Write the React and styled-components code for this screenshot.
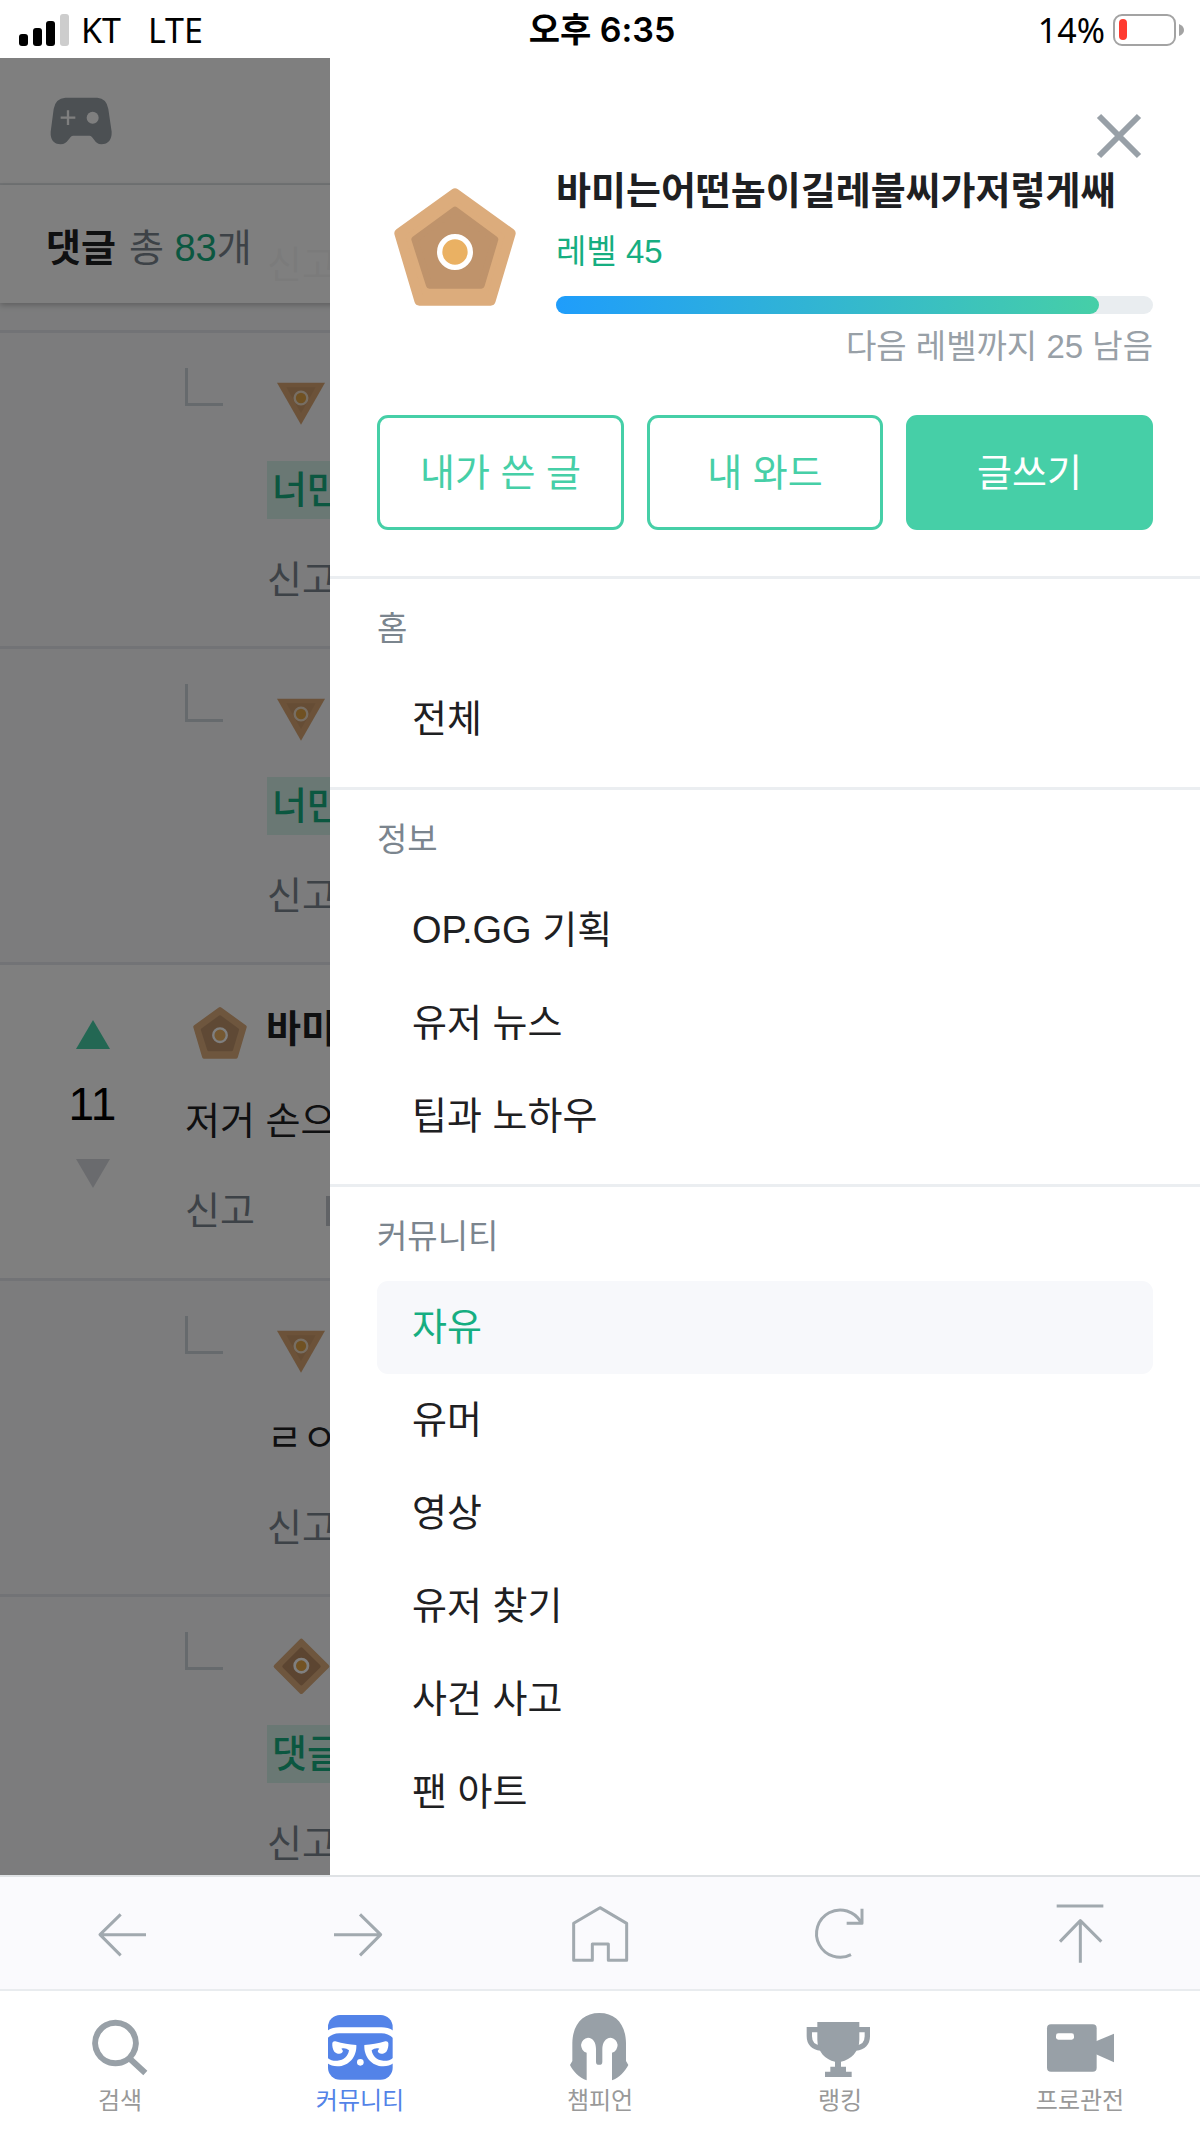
import React from 'react';
import { useState } from 'react';
import styled, { createGlobalStyle, css } from 'styled-components';

const sections = [
  { title: '홈', items: ['전체'] },
  { title: '정보', items: ['OP.GG 기획', '유저 뉴스', '팁과 노하우'] },
  { title: '커뮤니티', items: ['자유', '유머', '영상', '유저 찾기', '사건 사고', '팬 아트'] },
];

function Pentagon({ width, height }) {
  return (
    <svg width={width} height={height} viewBox="0 0 366 354" aria-hidden="true">
      <path d="M183 16 L350 136 L290 338 H76 L16 136 Z" fill="#dcac7c" stroke="#dcac7c" strokeWidth="30" strokeLinejoin="round" />
      <path d="M183 66 L303 154 L262 292 H106 L62 154 Z" fill="#bf936b" stroke="#bf936b" strokeWidth="20" strokeLinejoin="round" />
      <circle cx="183" cy="192" r="46" fill="#eab163" stroke="#fff" strokeWidth="16" />
    </svg>
  );
}

function Triangle() {
  return (
    <svg width="57" height="57" viewBox="0 0 171 171" aria-hidden="true">
      <path d="M12 26 H156 L84 152 Z" fill="#d8a473" />
      <path d="M40 40 H128 L84 118 Z" fill="#cd9b6b" />
      <circle cx="84" cy="72" r="19" fill="#e0a245" stroke="#efdcc6" strokeWidth="7" />
    </svg>
  );
}

function Diamond() {
  return (
    <svg width="57" height="57" viewBox="0 0 171 171" aria-hidden="true">
      <path d="M85 8 L163 85 L85 162 L8 85 Z" fill="#dcac7c" stroke="#dcac7c" strokeWidth="12" strokeLinejoin="round" />
      <path d="M85 34 L137 85 L85 136 L34 85 Z" fill="#b98b62" stroke="#b98b62" strokeWidth="12" strokeLinejoin="round" />
      <circle cx="85" cy="83" r="20" fill="#e6a746" stroke="#fff" strokeWidth="8" />
    </svg>
  );
}

function Reply({ icon, mark, text }) {
  return (
    <ReplyRow>
      <Elbow />
      <ReplyBody>
        <Badge>{icon}</Badge>
        <CommentLine>{mark ? <Mention href="#">{mark}</Mention> : text}</CommentLine>
        <Report>신고</Report>
      </ReplyBody>
    </ReplyRow>
  );
}

const tools = [
  { name: '뒤로', d: 'M168 95 H30 M92 34 L30 95 L92 157' },
  { name: '앞으로', d: 'M12 95 H152 M90 34 L152 95 L90 157' },
  { name: '홈', d: 'M90 14 L170 61 V172 H115 V123 H67 V172 H11 V61 Z' },
  { name: '새로고침', d: 'M153 58 A71 71 0 1 0 123 155 M156 17 V61 H110' },
  { name: '맨 위로', d: 'M20 9 H160 M91 179 V53 M30 116 L91 53 L154 116' },
];

const eye = 'M19 90 Q20 84 28 85 C50 92 70 95 91 96 C93 130 70 160 34 160 C22 160 12 156 4 151 V134 C14 142 24 144 34 143 C54 142 66 130 69 112 C62 106 54 104 46 107 C52 112 52 116 47 120 C42 124 30 122 25 116 C20 110 18 98 19 90 Z';

const tabs = [
  {
    name: '검색',
    icon: <path d="M88 29 a61 61 0 1 0 1 0 Z M130 136 L178 180" fill="none" stroke="currentColor" strokeWidth="18" />,
  },
  {
    name: '커뮤니티',
    icon: (
      <>
        <rect x="6" y="6" width="194" height="194" rx="36" fill="currentColor" />
        <path d="M4 53 Q20 43 40 43 H166 Q186 43 202 53 V76 Q186 61 166 61 H40 Q20 61 4 76 Z" fill="#fff" />
        <path d={eye} fill="#fff" />
        <path d={eye} fill="#fff" transform="translate(206 0) scale(-1 1)" />
        <circle cx="103" cy="148" r="10" fill="#fff" />
      </>
    ),
  },
  {
    name: '챔피언',
    icon: <path d="M62 202 C40 194 20 174 12 156 L19 144 V90 C20 35 50 0 100 0 C150 0 179 35 180 90 V144 L187 156 C178 174 160 194 138 202 V119 A23 23 0 0 0 134 74 C118 74 109 90 109 108 V146 a9 9 0 0 1 -19 0 V108 C90 90 82 74 66 74 A23 23 0 0 0 62 119 Z" fill="currentColor" />,
  },
  {
    name: '랭킹',
    icon: (
      <>
        <path d="M34 27 H160 V80 C160 115 135 140 105 146 V161 H120 V176 H137 V192 H57 V176 H73 V161 H87 V146 C58 140 34 115 34 80 Z" fill="currentColor" />
        <path d="M36 50 H10 V70 C10 90 22 104 44 105 M158 50 H184 V70 C184 90 172 104 150 105" fill="none" stroke="currentColor" strokeWidth="16" />
      </>
    ),
  },
  {
    name: '프로관전',
    icon: (
      <>
        <rect x="3" y="34" width="149" height="142" rx="12" fill="currentColor" />
        <path d="M150 85 L204 62 V148 L150 124 Z" fill="currentColor" />
        <rect x="30" y="61" width="54" height="19" rx="7" fill="#fff" />
      </>
    ),
  },
];

function App() {
  const [board, setBoard] = useState('자유');
  const [tab, setTab] = useState('커뮤니티');

  return <Container>
      <GlobalStyle />
      <StatusBar>
        <StatusSide>
          <svg width="51" height="32" viewBox="0 0 51 32" aria-hidden="true">
            <rect x="0" y="20" width="9" height="12" rx="3" />
            <rect x="14" y="14" width="9" height="18" rx="3" />
            <rect x="27" y="7" width="9" height="25" rx="3" />
            <rect x="41" y="0" width="9" height="32" rx="3" fill="#cdcdcd" />
          </svg>
          <Carrier>KT</Carrier>
          <Carrier>LTE</Carrier>
        </StatusSide>
        <Clock>오후 6:35</Clock>
        <StatusSide $end>
          <span>14%</span>
          <svg width="73" height="33" viewBox="0 0 73 33" aria-hidden="true">
            <rect x="2" y="1" width="61" height="30" rx="8" fill="none" stroke="#a3a3a3" strokeWidth="2" />
            <rect x="7" y="5" width="8" height="21" rx="4" fill="#ff3b30" />
            <path d="M67 10 Q72 12 72 16 Q72 20 67 22 Z" fill="#a3a3a3" />
          </svg>
        </StatusSide>
      </StatusBar>

      <Stage>
        <Header>
          <svg width="62" height="48" viewBox="0 0 186 144" aria-hidden="true">
            <path d="M46 2 H142 Q170 4 175 36 L185 104 Q186 140 154 142 C134 142 130 116 118 116 H70 C58 116 54 142 32 142 Q0 140 2 104 L11 36 Q16 4 46 2 Z" fill="#98a0a7" />
            <path d="M54 40 V84 M32 62 H76" stroke="#fff" strokeWidth="7" />
            <circle cx="128" cy="62" r="18" fill="#fff" />
          </svg>
        </Header>
        <TitleBar>
          <h2>댓글</h2>
          <span>총 <em>83</em>개</span>
        </TitleBar>
        <TuckedRow>
          <Report>신고</Report>
        </TuckedRow>
        <Reply icon={<Triangle />} mark="너만" />
        <Reply icon={<Triangle />} mark="너만" />
        <Comment>
          <Votes>
            <VoteButton aria-label="추천">
              <svg width="34" height="29" viewBox="0 0 34 29"><path d="M17 0 L34 29 H0 Z" fill="#46cfa7" /></svg>
            </VoteButton>
            <Score>11</Score>
            <VoteButton aria-label="비추천">
              <svg width="34" height="29" viewBox="0 0 34 29"><path d="M0 0 H34 L17 29 Z" fill="#d5d7dd" /></svg>
            </VoteButton>
          </Votes>
          <CommentBody>
            <Author><Pentagon width="54" height="52" /><strong>바미</strong></Author>
            <CommentLine>저거 손으</CommentLine>
            <Actions>
              <Report>신고</Report>
              <svg width="32" height="30" viewBox="0 0 32 30" aria-hidden="true"><path d="M0 0 H32 V30 H0 Z" fill="#c3c7cd" /></svg>
            </Actions>
          </CommentBody>
        </Comment>
        <Reply icon={<Triangle />} text="ㄹㅇ" />
        <Reply icon={<Diamond />} mark="댓글" />

        <Dim />
        <Drawer>
          <CloseButton aria-label="닫기">
            <svg width="44" height="44" viewBox="0 0 44 44"><path d="M2 2 L42 42 M42 2 L2 42" stroke="#98a0a7" strokeWidth="6" /></svg>
          </CloseButton>
          <Profile>
            <Avatar><Pentagon width="122" height="118" /></Avatar>
            <Info>
              <Nickname>바미는어떤놈이길레불씨가저렇게쌔</Nickname>
              <Level>레벨 45</Level>
              <Gauge><GaugeFill $percent={91} /></Gauge>
              <NextLevel>다음 레벨까지 25 남음</NextLevel>
            </Info>
          </Profile>
          <ButtonRow>
            <MyButton>내가 쓴 글</MyButton>
            <MyButton>내 와드</MyButton>
            <MyButton $primary>글쓰기</MyButton>
          </ButtonRow>
          {sections.map((section) => (
            <Section key={section.title}>
              <SectionTitle>{section.title}</SectionTitle>
              {section.items.map((item) => (
                <BoardLink href="#" key={item} $active={item === board} onClick={() => setBoard(item)}>{item}</BoardLink>
              ))}
            </Section>
          ))}
        </Drawer>
      </Stage>

      <ToolBar>
        {tools.map((tool) => (
          <ToolButton key={tool.name} aria-label={tool.name}>
            <svg width="60" height="60" viewBox="0 0 180 180">
              <path d={tool.d} fill="none" stroke="#a1a9af" strokeWidth="9" strokeLinejoin="round" />
            </svg>
          </ToolButton>
        ))}
      </ToolBar>
      <TabBar>
        {tabs.map((item) => (
          <TabButton key={item.name} $active={item.name === tab} onClick={() => setTab(item.name)}>
            <svg width="68" height="68" viewBox="0 0 204 204" aria-hidden="true">{item.icon}</svg>
            <span>{item.name}</span>
          </TabButton>
        ))}
      </TabBar>
  </Container>;
}

export default App;


// **************Styling***************

const GlobalStyle = createGlobalStyle`
  * {
    box-sizing: border-box;
  }

  body {
    margin: 0;
    background: #fff;
    color: #1e2022;
    font-family: "Liberation Sans", "Noto Sans CJK KR", sans-serif;
    font-size: 38px;
  }

  h2, h3, p {
    margin: 0;
    font-size: inherit;
  }

  a {
    color: inherit;
    text-decoration: none;
  }

  button {
    border: 0;
    padding: 0;
    background: none;
    font: inherit;
    color: inherit;
    cursor: pointer;
  }

  svg {
    display: block;
    flex-shrink: 0;
    overflow: visible;
  }
`;

const Container = styled.div`
  display: flex;
  flex-direction: column;
  height: 100vh;
  overflow: hidden;
`;

const StatusBar = styled.div`
  display: grid;
  grid-template-columns: 1fr auto 1fr;
  align-items: center;
  flex-shrink: 0;
  height: 58px;
  padding: 0 15px 0 19px;
  color: #000;
  font-family: "Noto Sans", "Noto Sans CJK KR", sans-serif;
  font-size: 34px;
  line-height: 60px;
`;

const StatusSide = styled.div`
  display: flex;
  align-items: center;
  justify-content: ${props => props.$end ? 'flex-end' : 'flex-start'};
  gap: ${props => props.$end ? '7px' : '0'};
`;

const Carrier = styled.span`
  padding-left: 11px;
  margin-right: 16px;
`;

const Clock = styled.div`
  font-family: Inter, "Noto Sans CJK KR", sans-serif;
  font-weight: 600;
`;

const Stage = styled.main`
  position: relative;
  flex: 1;
  min-height: 0;
  overflow: hidden;
`;

const Header = styled.header`
  display: flex;
  align-items: center;
  height: 127px;
  padding-left: 50px;
  border-bottom: 2px solid #e4e8eb;
`;

const TitleBar = styled.div`
  position: relative;
  z-index: 1;
  display: flex;
  align-items: center;
  gap: 13px;
  height: 118px;
  margin-bottom: -118px;
  padding-left: 46px;
  background: rgba(255, 255, 255, 0.93);
  box-shadow: 0 2px 6px rgba(0, 0, 0, 0.25);
  color: #7b858e;

  h2 {
    color: #1e2022;
  }

  em {
    font-style: normal;
    color: #16ae81;
  }
`;

const row = css`
  display: flex;
  align-items: flex-start;
  height: 316px;
  border-top: 3px solid #e4e6ec;
`;

const TuckedRow = styled.div`
  height: 145px;
  padding: 57px 0 0 267px;
  background: #f8f9fa;
`;

const ReplyRow = styled.article`
  ${row}
  gap: 44px;
  padding-left: 185px;
  background: #f8f9fa;
`;

const Elbow = styled.i`
  width: 38px;
  height: 38px;
  margin-top: 35px;
  border: solid #cdd5db;
  border-width: 0 0 3px 3px;
`;

const ReplyBody = styled.div`
  padding-top: 41px;
`;

const Badge = styled.div`
  padding-left: 6px;
`;

const CommentLine = styled.p`
  margin: 30px 0 38px;
  line-height: 58px;
`;

const Mention = styled.a`
  display: inline-block;
  padding: 0 5px;
  background: #d5f0e8;
  color: #16ae81;
  font-weight: 500;
`;

const Report = styled.button`
  display: block;
  line-height: 46px;
  color: #7b858e;
`;

const Comment = styled.article`
  ${row}
  background: #fff;
`;

const Votes = styled.div`
  display: flex;
  flex-direction: column;
  align-items: center;
  width: 185px;
  padding-top: 55px;
`;

const VoteButton = styled.button`
  width: 34px;
`;

const Score = styled.span`
  margin: 25px 0;
  color: #000;
  font-size: 46px;
  line-height: 60px;
`;

const CommentBody = styled.div`
  padding-top: 39px;
`;

const Author = styled.div`
  display: flex;
  align-items: center;
  gap: 19px;
  height: 58px;
  padding-left: 8px;

  strong {
    height: 58px;
    line-height: 50px;
  }
`;

const Actions = styled.div`
  display: flex;
  align-items: center;
  gap: 71px;
`;

const Dim = styled.div`
  position: absolute;
  inset: 0;
  z-index: 2;
  background: rgba(0, 0, 0, 0.5);
`;

const Drawer = styled.aside`
  position: absolute;
  top: 0;
  right: 0;
  bottom: 0;
  z-index: 3;
  display: flex;
  flex-direction: column;
  width: 72.5%;
  padding-top: 44px;
  overflow: hidden;
  background: #fff;
`;

const CloseButton = styled.button`
  align-self: flex-end;
  margin-right: 47px;
  padding: 12px 12px 9px;
`;

const Profile = styled.div`
  display: flex;
  gap: 40px;
  padding: 0 47px;
`;

const Avatar = styled.div`
  padding: 21px 0 0 17px;
`;

const Info = styled.div`
  flex: 1;
  min-width: 0;
`;

const Nickname = styled.h3`
  line-height: 48px;
  white-space: nowrap;
`;

const Level = styled.p`
  margin-top: 17px;
  color: #16ae81;
  font-size: 33px;
  line-height: 40px;
`;

const Gauge = styled.div`
  height: 18px;
  margin: 24px 0 13px;
  border-radius: 9px;
  background: #e9edf0;
`;

const GaugeFill = styled.div`
  width: ${props => props.$percent}%;
  height: 100%;
  border-radius: 9px;
  background: linear-gradient(90deg, #1f9dfb, #46cfa7);
`;

const NextLevel = styled.p`
  color: #98a0a7;
  font-size: 33px;
  line-height: 40px;
  text-align: right;
`;

const ButtonRow = styled.div`
  display: grid;
  grid-template-columns: 247fr 236fr 247fr;
  gap: 23px;
  padding: 48px 47px 46px;
`;

const MyButton = styled.button`
  height: 115px;
  padding-bottom: 6px;
  border: 3px solid #46cfa7;
  border-radius: 11px;
  background: ${props => props.$primary ? '#46cfa7' : '#fff'};
  color: ${props => props.$primary ? '#fff' : '#46cfa7'};
`;

const Section = styled.nav`
  padding: 0 47px 21px;
  border-top: 3px solid #ebeef1;
`;

const SectionTitle = styled.h3`
  padding-top: 6px;
  color: #7b858e;
  font-size: 33px;
  font-weight: 400;
  line-height: 88px;
`;

const BoardLink = styled.a`
  display: block;
  padding-left: 35px;
  border-radius: 11px;
  background: ${props => props.$active ? '#f7f8fb' : 'transparent'};
  color: ${props => props.$active ? '#16ae81' : '#1e2022'};
  line-height: 93px;
`;

const ToolBar = styled.div`
  display: grid;
  grid-template-columns: repeat(5, 1fr);
  flex-shrink: 0;
  height: 116px;
  border-top: 2px solid #dfe2e5;
  border-bottom: 2px solid #e9ecef;
  background: #fafafd;
`;

const ToolButton = styled.button`
  display: flex;
  align-items: center;
  justify-content: center;
`;

const TabBar = styled.nav`
  display: grid;
  grid-template-columns: repeat(5, 1fr);
  flex-shrink: 0;
  height: 142px;
  background: #fff;
`;

const TabButton = styled.button`
  display: flex;
  flex-direction: column;
  align-items: center;
  padding-top: 22px;
  color: ${props => props.$active ? '#5383e8' : '#98a0a7'};

  span {
    margin-top: 3px;
    color: ${props => props.$active ? '#5383e8' : '#999'};
    font-size: 24px;
    line-height: 34px;
  }
`;
